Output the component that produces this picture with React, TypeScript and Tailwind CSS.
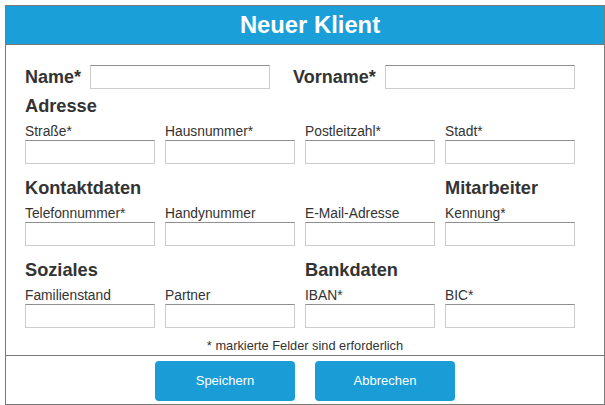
const font = { fontFamily: '"Liberation Sans", Arial, sans-serif' };

function Field({ label }: { label: string }) {
  return (
    <div className="flex flex-col">
      <label className="text-[13.8px] leading-[16px] text-[#333]">{label}</label>
      <input className="h-[24px] w-[130px] border border-[#cccccc] border-t-[#8f8f8f] bg-white outline-none" />
    </div>
  );
}

function Heading({ children }: { children?: React.ReactNode }) {
  return <h2 className="h-[20px] text-[18.2px] leading-[20px] font-bold text-[#333]">{children}</h2>;
}

function Section({ headings, fields }: { headings: string[]; fields: string[] }) {
  return (
    <div className="grid grid-cols-[130px_130px_130px_130px] gap-x-[10px]">
      {headings.map((h, i) => (
        <div key={"h" + i} className="mb-[8px] whitespace-nowrap">
          <Heading>{h}</Heading>
        </div>
      ))}
      {fields.map((f) => (
        <Field key={f} label={f} />
      ))}
    </div>
  );
}

export default function App() {
  return (
    <div className="w-[605px] h-[405px] bg-white pl-[5px] pt-[5px]" style={font}>
      <div className="w-[600px] h-[400px] border border-[#7a7a7a] flex flex-col">
        <div className="h-[39px] shrink-0 bg-[#1a9fd9] border-b border-[#7a7a7a] flex items-center justify-center pl-[10px]">
          <h1 className="text-white text-[23.8px] font-bold leading-none">Neuer Klient</h1>
        </div>

        <div className="h-[310px] shrink-0 pl-[19px] pt-[20px] flex flex-col">
          <div className="flex items-center h-[24px]">
            <span className="w-[65px] text-[18px] font-bold text-[#333]">Name*</span>
            <input className="h-[24px] w-[180px] border border-[#cccccc] border-t-[#8f8f8f] outline-none" />
            <span className="ml-[23px] w-[92px] text-[18px] font-bold text-[#333]">Vorname*</span>
            <input className="h-[24px] w-[190px] border border-[#cccccc] border-t-[#8f8f8f] outline-none" />
          </div>

          <div className="mt-[7px] flex flex-col gap-[14px]">
            <Section headings={["Adresse", "", "", ""]} fields={["Straße*", "Hausnummer*", "Postleitzahl*", "Stadt*"]} />
            <Section headings={["Kontaktdaten", "", "", "Mitarbeiter"]} fields={["Telefonnummer*", "Handynummer", "E-Mail-Adresse", "Kennung*"]} />
            <Section headings={["Soziales", "", "Bankdaten", ""]} fields={["Familienstand", "Partner", "IBAN*", "BIC*"]} />
          </div>

          <p className="mt-[11px] pr-[19px] text-center text-[12.8px] leading-[14px] text-[#333]">
            * markierte Felder sind erforderlich
          </p>
        </div>

        <div className="h-[49px] shrink-0 border-t border-[#7a7a7a] flex justify-center gap-[20px] pt-[5px]">
          <button className="w-[140px] h-[40px] rounded-[4px] bg-[#1a9cd6] text-white text-[13px]">Speichern</button>
          <button className="w-[140px] h-[40px] rounded-[4px] bg-[#1a9cd6] text-white text-[13px]">Abbrechen</button>
        </div>
      </div>
    </div>
  );
}
